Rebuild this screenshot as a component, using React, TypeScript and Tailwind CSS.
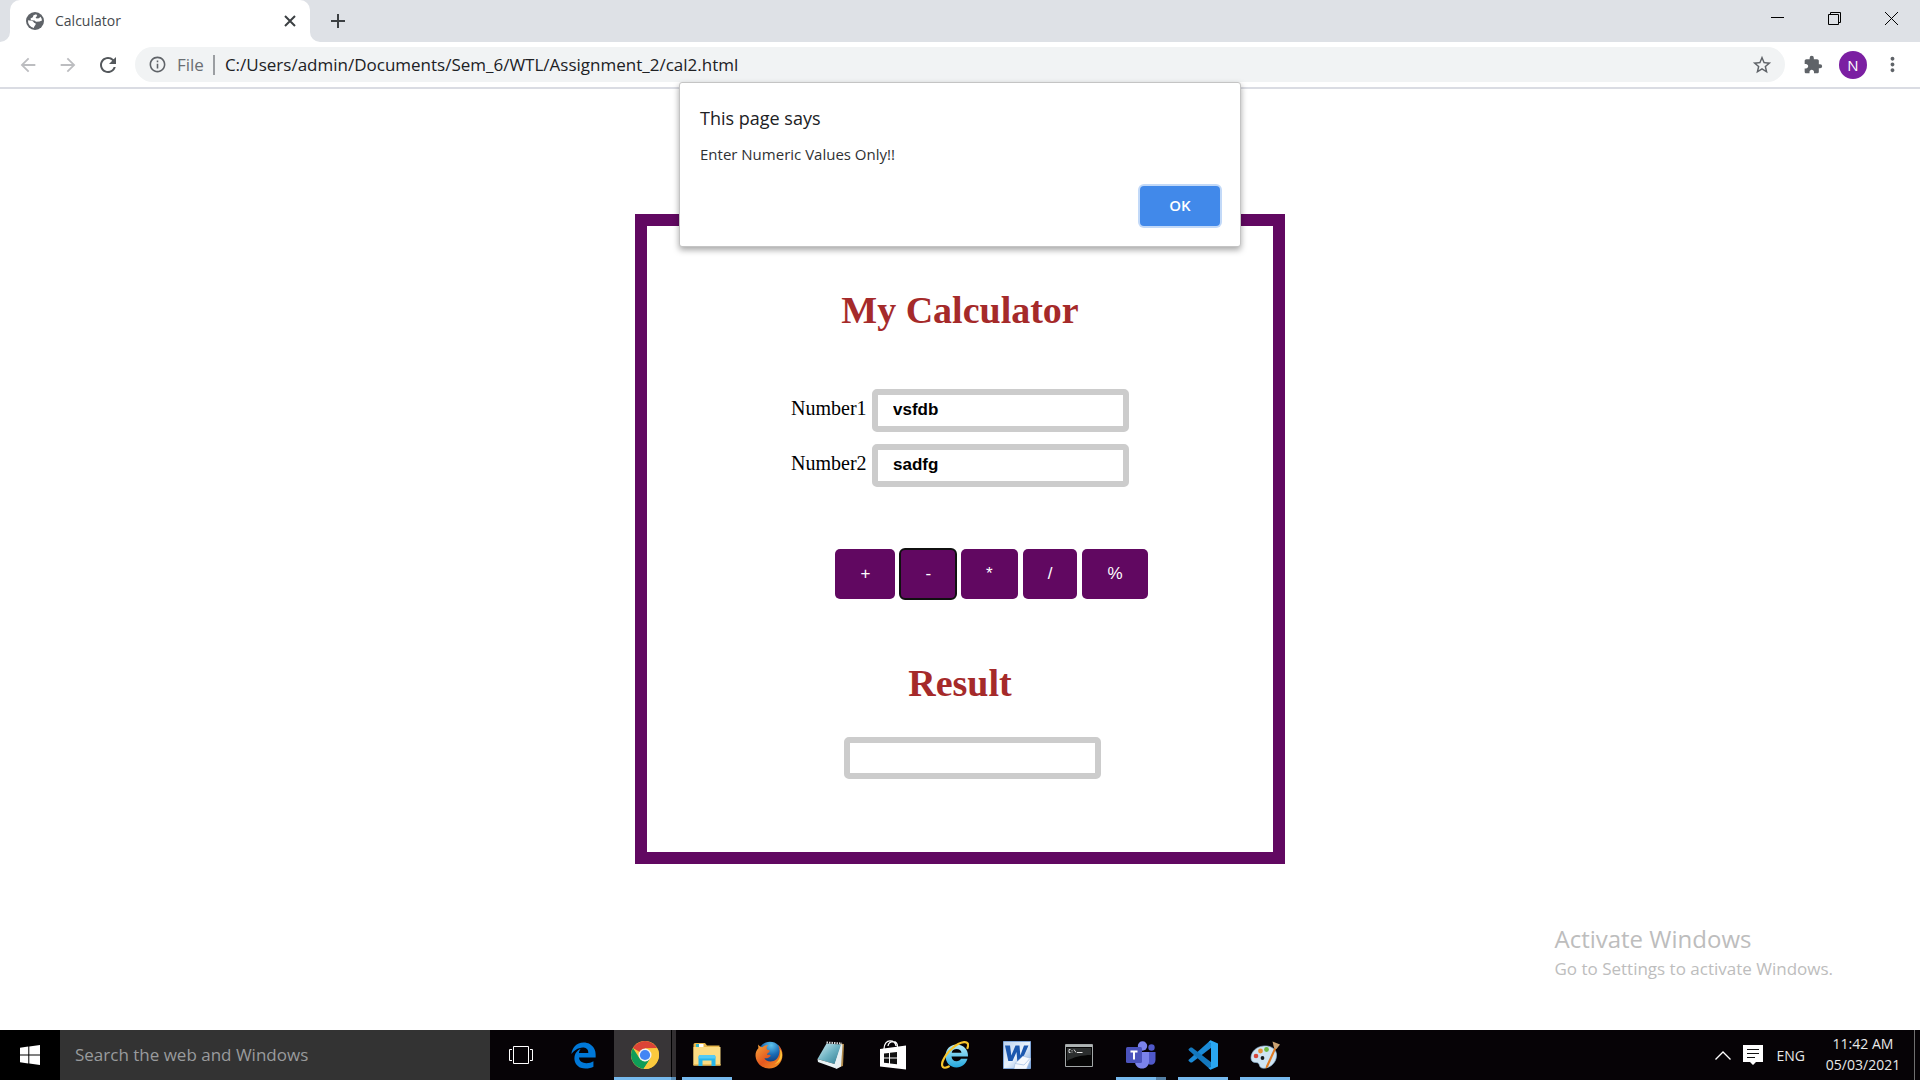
import React from "react";
import { MdArrowBack, MdArrowForward, MdRefresh, MdInfoOutline, MdStarBorder, MdExtension, MdMoreVert } from "react-icons/md";
import { FaEdgeLegacy } from "react-icons/fa";

function GlobeIcon() {
  return (
    <svg viewBox="0 0 18 18" className="size-[18px] shrink-0" aria-hidden="true">
      <circle cx="9" cy="9" r="9" fill="#5f6368" />
      <path d="M10.200 2.200 7.500 3.200 6.800 5.200 4.500 6.500 5 8.200 8.500 8.400 10 9.800 13.500 9.600 16 8.600A7 7 0 0 0 14.500 4.700L13 6.300 10.500 6.500 9.600 5.300 11.300 4z" fill="#fff" />
      <path d="M2 8.300c1.500.3 3.600.1 4.800.9 1 .7.8 1.500 1.900 1.800 1.100.2 1.300 1 .7 2-.5.900-1.400 1.300-1.500 2.900A7 7 0 0 1 2 8.300z" fill="#fff" />
    </svg>
  );
}

function ChromeIcon() {
  return (
    <svg viewBox="0 0 28 28" className="size-7" aria-hidden="true">
      <circle cx="14" cy="14" r="14" fill="#fbc93d" />
      <path d="M14 14 1.900 7A14 14 0 0 1 26.100 7L14 7.600z" fill="#db4437" />
      <path d="M1.900 7a14 14 0 0 0 10.600 20.900L19.600 17.200 14 20.400 8.500 17.200z" fill="#0f9d58" />
      <path d="M14 7.600h12.400a14 14 0 0 1-13.900 20.300l7.100-10.700z" fill="#fbc93d" />
      <circle cx="14" cy="14" r="6.500" fill="#f1f1f1" />
      <circle cx="14" cy="14" r="5.100" fill="#4285f4" />
    </svg>
  );
}

function ExplorerIcon() {
  return (
    <svg viewBox="0 0 28 26" className="h-[26px] w-7" aria-hidden="true">
      <path d="M.500 2.500Q.500 1 2 1h10l2 2.500h12.500v19H.500z" fill="#e8b84a" />
      <path d="M3 2h7.500v3H3z" fill="#fff" />
      <path d="M3 2h3v3H3z" fill="#35b6c9" />
      <path d="M.500 5h27v18.500H.500z" fill="#fbdc83" />
      <path d="M.500 22h27v1.500H.500z" fill="#eec057" />
      <path d="M5.500 24V15Q5.500 13 7.500 13h13q2 0 2 2v9h-4v-5.500h-9V24z" fill="#27b5ea" />
      <path d="M5.500 15q0-2 2-2h13q2 0 2 2v1.500h-17z" fill="#53cbf5" />
    </svg>
  );
}

function FirefoxIcon() {
  return (
    <svg viewBox="0 0 28 28" className="size-7" aria-hidden="true">
      <defs>
        <radialGradient id="ffGlobe" cx="0.550" cy="0.150" r="0.800">
          <stop offset="0" stopColor="#5fc4ee" />
          <stop offset="0.500" stopColor="#1b6bb5" />
          <stop offset="1" stopColor="#12306e" />
        </radialGradient>
        <linearGradient id="ffFox" x1="0" y1="0" x2="1" y2="1">
          <stop offset="0" stopColor="#f6a63a" />
          <stop offset="0.500" stopColor="#e4581f" />
          <stop offset="1" stopColor="#f59a23" />
        </linearGradient>
      </defs>
      <circle cx="15" cy="12.500" r="11.800" fill="url(#ffGlobe)" />
      <path d="M3.500 3.500C3 5 3.200 6 3.500 7 1 9.500.300 12.500.600 15.500 1.500 22.500 7 27.500 14 27.500c8 0 13.500-6 13.500-13.500 0-4-1.500-7.500-4.500-10 1.500 3 1.800 5.500 1.300 8-.6 5-4.300 8.500-8.800 8.500-3 0-5.500-1.500-6-3.500 2 .8 3.500.200 5-1 .5-.5 1-.8 1.500-.9-1-1.600-2.500-1.600-4-1.100.2-1 .2-1.700 1.800-2.500.9-.5 1-1.700.4-2.500-1.400 0-2.200-.5-2.700-1.500C11.700 5.500 12.500 4.500 13.500 4 10.500 3.800 8.500 5 7.300 6.200 6 6 4.300 5.500 3.500 3.500z" fill="url(#ffFox)" />
      <path d="M24.500 8c2 5 .5 12-5 15 6-1 8-6 7.500-10-.2-2-1.200-3.600-2.500-5z" fill="#fbc53a" />
    </svg>
  );
}

function NotepadIcon() {
  return (
    <svg viewBox="0 0 28 28" className="size-7" aria-hidden="true">
      <defs>
        <linearGradient id="npad" x1="0" y1="0" x2="1" y2="1">
          <stop offset="0" stopColor="#d5eef2" />
          <stop offset="0.500" stopColor="#6fb4c4" />
          <stop offset="1" stopColor="#2f7b91" />
        </linearGradient>
      </defs>
      <path d="M23 2.500 27 3l-1 22-6 2z" fill="#b08a4a" />
      <path d="m23.500 3 2 .5-1.500 22-4.500 2.500-3-3z" fill="#e8f0f2" />
      <path d="M9.500 2.500 24 3.500 17.500 23 .500 18z" fill="url(#npad)" />
      <path d="m.500 18 17 5 1.500 4.500L1 21z" fill="#e9f3f5" />
      <path d="M9.500 1.500 25 2.500" stroke="#d9d9d9" strokeWidth="2" strokeDasharray="1.500 1" />
    </svg>
  );
}

function StoreIcon() {
  return (
    <svg viewBox="0 0 28 30" className="h-[30px] w-7" aria-hidden="true">
      <path d="M5 9C5 3.500 8 .800 11 .800S16.500 3 17 6M9 6c.5-3 3-4.300 5.300-4.300C17 1.700 18.500 4 18.500 7" fill="none" stroke="#fff" strokeWidth="1.300" />
      <path d="M1 9 27 5.500v24L1 26.500z" fill="#fff" />
      <path d="m5 13.500 5-.6v4.700H5zM11 12.800l7-.9v5.700h-7zM5 18.600h5v4.700l-5-.5zM11 18.600h7v5.600l-7-.8z" fill="#111" />
    </svg>
  );
}

function ExplorerEIcon() {
  return (
    <svg viewBox="0 0 28 28" className="size-7" aria-hidden="true">
      <defs>
        <linearGradient id="ieBody" x1="0" y1="0" x2="0" y2="1">
          <stop offset="0" stopColor="#b6ecfb" />
          <stop offset="1" stopColor="#22a7dd" />
        </linearGradient>
      </defs>
      <path d="M27 15.500H10.500c.3 3 2.200 4.800 5 4.800 2.200 0 3.700-1 4.500-2.500h6.500C25 23 21 26.500 15.500 26.500 9 26.500 4.500 21.500 4.500 15S9 3.500 15.500 3.500C22.500 3.500 27.500 8.500 27 15.500zM10.700 11.700h9.800c-.4-2.200-2.200-3.600-4.900-3.600s-4.400 1.400-4.900 3.600z" fill="url(#ieBody)" />
      <path d="M26.500 7C28 3 26.500.800 23 1.200 15.500 2 5 11.500 1.800 20c-2 5.500.2 8.500 6 5.500" fill="none" stroke="#f7c52c" strokeWidth="2.200" strokeLinecap="round" />
    </svg>
  );
}

function WordIcon() {
  return (
    <svg viewBox="0 0 28 28" className="size-7" aria-hidden="true">
      <defs>
        <linearGradient id="wordBg" x1="0" y1="0" x2="1" y2="1">
          <stop offset="0" stopColor="#bcd3f0" />
          <stop offset="0.500" stopColor="#e8f1fb" />
          <stop offset="1" stopColor="#7ba5da" />
        </linearGradient>
      </defs>
      <path d="M.500.500h27v27H.500z" fill="url(#wordBg)" stroke="#7fa6d9" />
      <path d="M2 4.500h5l1.300 10L12.500 4.500h4l.8 10L21 4.500h4.500L18.500 20h-4.200l-.8-9-4 9H5.300z" fill="#1b57ae" />
      <path d="m20 15 8 2.500-4.500 10.500H11l1-5.500z" fill="#f6f9fd" stroke="#9db9de" strokeWidth="0.600" />
      <path d="m12 22.500 9 1.500 5.500-6" fill="none" stroke="#aac3e4" strokeWidth="0.800" />
    </svg>
  );
}

function TerminalIcon() {
  return (
    <svg viewBox="0 0 28 23" className="h-[23px] w-7" aria-hidden="true">
      <path d="M.500.500h27v22H.500z" fill="#050505" stroke="#a3a8a8" />
      <path d="M1 1h26v2H1z" fill="#aeb4b4" />
      <path d="M2 4h24v7C18 11 8 13 2 17z" fill="#2b2e2e" />
      <path d="M5.500 5.500H4v3h1.500M7 6v.8M7 7.700v.8M9 5.500l2 3" fill="none" stroke="#e5e5e5" strokeWidth="0.900" />
      <path d="M12 8.500h5.500" stroke="#e5e5e5" />
    </svg>
  );
}

function TeamsIcon() {
  return (
    <svg viewBox="0 0 30 28" className="h-7 w-[30px]" aria-hidden="true">
      <circle cx="25.500" cy="6.500" r="3.200" fill="#5059c9" />
      <path d="M21 11h8.500v8c0 3-2 4.800-4.500 4.800S21 22 21 19z" fill="#5059c9" />
      <circle cx="16.500" cy="5" r="4.700" fill="#7b83eb" />
      <path d="M9 11h14v9.500c0 4.300-3 7-7 7s-7-2.700-7-7z" fill="#7b83eb" />
      <path d="M1.500 6H14.500Q16 6 16 7.500v13Q16 22 14.500 22H1.500Q0 22 0 20.500v-13Q0 6 1.500 6z" fill="#4b53bc" />
      <path d="M4.500 9.500h7v2H9v7H7v-7H4.500z" fill="#fff" />
    </svg>
  );
}

function CodeIcon() {
  return (
    <svg viewBox="0 0 30 30" className="size-[30px]" aria-hidden="true">
      <path d="M22.500.300 1 19.500l-.6 1.200L2.500 22.500l1.500.1L23.500 7.500z" fill="#1b8ad6" />
      <path d="M22.500 29.700 1 10.500.400 9.300 2.500 7.500 4 7.400 23.500 22.500z" fill="#1478be" />
      <path d="M22.500.300 30 3.500v23l-7.500 3.200-2-1.800 2.500-1V3l-2.500-.8z" fill="#2aa7f2" />
    </svg>
  );
}

function PaintIcon() {
  return (
    <svg viewBox="0 0 30 28" className="h-7 w-[30px]" aria-hidden="true">
      <path d="M14 5C6 5.500 1 11 1 17c0 3 2 4.500 4.500 4.500 2.500-.2 3.500 1 4 3 .6 2.500 3 3 6 2.500C22 26 27 20 26.500 13 26 8 21 4.500 14 5z" fill="#cfe4f3" stroke="#8fb6d2" strokeWidth="0.700" />
      <circle cx="6" cy="15" r="2.300" fill="#d8473c" />
      <circle cx="10.500" cy="10" r="2.400" fill="#e8913a" />
      <circle cx="16.500" cy="8.500" r="2.400" fill="#6cb941" />
      <circle cx="12.500" cy="17" r="1.900" fill="#16191c" />
      <path d="m25 5.500 1.700 1L18 26l-2.500 1.800L16 25z" fill="#e07b23" />
      <path d="M22.500.500 30 3.500 26.500 8l-2.500-1.200z" fill="#c9a272" />
    </svg>
  );
}

function TaskViewIcon() {
  return (
    <svg viewBox="0 0 24 18" className="h-[18px] w-6" fill="none" stroke="#fff" aria-hidden="true">
      <path d="M4.500.500h15v17h-15zM3 3.500H.500v11H3M21 3.500h2.500v11H21" />
    </svg>
  );
}

const apps = [
  { name: "Task View", icon: <TaskViewIcon />, state: "none" },
  { name: "Edge", icon: <FaEdgeLegacy className="size-[27px] text-[#0078d7]" />, state: "none" },
  { name: "Chrome", icon: <ChromeIcon />, state: "active" },
  { name: "File Explorer", icon: <ExplorerIcon />, state: "open" },
  { name: "Firefox", icon: <FirefoxIcon />, state: "none" },
  { name: "Notepad", icon: <NotepadIcon />, state: "none" },
  { name: "Store", icon: <StoreIcon />, state: "none" },
  { name: "Internet Explorer", icon: <ExplorerEIcon />, state: "none" },
  { name: "Word", icon: <WordIcon />, state: "none" },
  { name: "Command Prompt", icon: <TerminalIcon />, state: "none" },
  { name: "Teams", icon: <TeamsIcon />, state: "stacked" },
  { name: "Visual Studio Code", icon: <CodeIcon />, state: "open" },
  { name: "Paint", icon: <PaintIcon />, state: "open" },
];

function TaskbarApp({ name, icon, state }: { name: string; icon: React.ReactNode; state: string }) {
  const active = state === "active";
  return (
    <button aria-label={name} className={active ? "relative flex h-[50px] w-[62px] items-center justify-center bg-[#383537]" : "relative flex h-[50px] w-[62px] items-center justify-center"}>
      {icon}
      {active && (
        <span className="absolute inset-0 flex justify-end">
          <span className="h-full w-[5px] border-l border-black bg-black/10" />
        </span>
      )}
      {active && (
        <span className="absolute inset-x-0 bottom-0 flex h-[3px]">
          <span className="flex-1 bg-[#76b9ed]" />
          <span className="w-[5px] bg-[#5b8fb8]" />
        </span>
      )}
      {state === "open" && <span className="absolute inset-x-[6px] bottom-0 h-[3px] bg-[#76b9ed]" />}
      {state === "stacked" && (
        <span className="absolute inset-x-[6px] bottom-0 flex h-[3px]">
          <span className="flex-1 bg-[#76b9ed]" />
          <span className="w-[10px] bg-[#5480a5]" />
        </span>
      )}
    </button>
  );
}

function BrowserHeader() {
  return (
    <header>
      <div className="flex h-[42px] items-stretch bg-[#dee1e6] pl-[10px]">
        <div className="relative flex w-[300px] items-center rounded-t-[10px] bg-white pr-[14px] pl-4">
          <GlobeIcon />
          <span className="ml-[11px] flex-1 pb-[2px] text-[14px] text-[#45494d]">Calculator</span>
          <button aria-label="Close tab">
            <svg viewBox="0 0 12 12" className="size-3" stroke="#3c4043" strokeWidth="2" aria-hidden="true">
              <path d="m1 1 10 10M11 1 1 11" />
            </svg>
          </button>
          <svg viewBox="0 0 10 10" className="absolute bottom-0 -left-[10px] size-[10px]" fill="#fff" aria-hidden="true">
            <path d="M10 0v10H0A10 10 0 0 0 10 0z" />
          </svg>
          <svg viewBox="0 0 10 10" className="absolute -right-[10px] bottom-0 size-[10px]" fill="#fff" aria-hidden="true">
            <path d="M0 0v10h10A10 10 0 0 1 0 0z" />
          </svg>
        </div>
        <button aria-label="New tab" className="ml-5 self-center">
          <svg viewBox="0 0 16 16" className="size-4" stroke="#3c4043" strokeWidth="2" aria-hidden="true">
            <path d="M8 1v14M1 8h14" />
          </svg>
        </button>
        <div className="ml-auto flex h-[37px]">
          <button aria-label="Minimize" className="flex w-[57px] items-center justify-center">
            <svg viewBox="0 0 13 13" className="size-[13px]" stroke="#000" aria-hidden="true"><path d="M0 5.500h13" /></svg>
          </button>
          <button aria-label="Restore" className="flex w-[57px] items-center justify-center">
            <svg viewBox="0 0 13 13" className="size-[13px]" fill="none" stroke="#000" aria-hidden="true">
              <path d="M.500 2.500h10v10H.500zM2.500 2V.500h10v10H11" />
            </svg>
          </button>
          <button aria-label="Close" className="flex w-[57px] items-center justify-center">
            <svg viewBox="0 0 13 13" className="size-[13px]" stroke="#000" aria-hidden="true"><path d="m0 0 13 13M13 0 0 13" /></svg>
          </button>
        </div>
      </div>
      <div className="flex h-[47px] items-center border-b-2 border-[#dadce3] bg-white pr-4 pl-[17px]">
        <button aria-label="Back"><MdArrowBack className="size-[22px] text-[#bcbdc0]" /></button>
        <button aria-label="Forward" className="ml-[18px]"><MdArrowForward className="size-[22px] text-[#bcbdc0]" /></button>
        <button aria-label="Reload" className="ml-[17px]"><MdRefresh className="size-[24px] text-[#54585c]" /></button>
        <div className="ml-[15px] flex h-[35px] flex-1 items-center rounded-full bg-[#f1f3f4] pr-3 pl-[13px]">
          <MdInfoOutline className="size-[19px] text-[#5f6368]" />
          <span className="ml-[10px] text-[17px] text-[#6a6e73]">File</span>
          <span className="ml-[9px] h-5 w-[2px] bg-[#9b9ea2]" />
          <input
            aria-label="Address"
            className="ml-[10px] min-w-0 flex-1 bg-transparent text-[17px] text-[#202124] outline-none"
            defaultValue="C:/Users/admin/Documents/Sem_6/WTL/Assignment_2/cal2.html"
          />
          <button aria-label="Bookmark this page"><MdStarBorder className="size-[22px] text-[#5f6368]" /></button>
        </div>
        <button aria-label="Extensions" className="ml-[18px]"><MdExtension className="size-[20px] text-[#5f6368]" /></button>
        <button aria-label="Profile" className="ml-4 size-7 rounded-full bg-[#7b1fa2] text-[15px] leading-7 text-white">N</button>
        <button aria-label="Menu" className="ml-[14px]"><MdMoreVert className="size-[23px] text-[#5f6368]" /></button>
      </div>
    </header>
  );
}

function AlertDialog() {
  return (
    <div
      role="alertdialog"
      aria-labelledby="alert-title"
      aria-describedby="alert-text"
      className="absolute top-[82px] left-1/2 flex w-[562px] -translate-x-1/2 flex-col rounded-[3px] border border-[#c4c4c4] bg-white px-5 pt-[22px] pb-5 shadow-[0_3px_6px_rgba(0,0,0,0.35)]"
    >
      <h2 id="alert-title" className="text-[18px] leading-[26px] text-[#202124]">This page says</h2>
      <p id="alert-text" className="mt-[13px] text-[15px] leading-[20px] text-[#303134]">Enter Numeric Values Only!!</p>
      <button className="mt-[22px] h-10 w-20 self-end rounded-[4px] bg-[#4189ea] pb-[2px] text-[15px] font-semibold text-white ring-2 ring-[#c2d9f8]">OK</button>
    </div>
  );
}

const fieldClass = "h-[43px] w-[257px] rounded-[5px] border-[6px] border-[#cccccc] bg-white pb-[1px] pl-[15px] font-['Liberation_Sans',Arial,sans-serif] text-[17px] font-bold text-black outline-none";
const keyClass = "h-[50px] rounded-[5px] bg-[#610861] px-[25px] text-[17px] text-white";
const keyFocusClass = "h-[50px] rounded-[5px] bg-[#610861] px-[25px] text-[17px] text-white outline-2 -outline-offset-1 outline-[#101010]";
const headingClass = "text-center text-[38px] leading-[44px] font-bold text-[#a52a2a]";

function Calculator() {
  return (
    <section className="mx-auto mt-[125px] w-[650px] border-[12px] border-[#610861] bg-white pt-[62px] pb-[73px] font-['Liberation_Serif','Times_New_Roman',serif]">
      <h1 className={headingClass}>My Calculator</h1>
      <div className="mt-[57px] flex flex-col items-center gap-3">
        <div className="flex items-baseline gap-[5px]">
          <label htmlFor="n1" className="w-[76px] text-[20px] leading-6 text-black">Number1</label>
          <input id="n1" type="text" defaultValue="vsfdb" className={fieldClass} />
        </div>
        <div className="flex items-baseline gap-[5px]">
          <label htmlFor="n2" className="w-[76px] text-[20px] leading-6 text-black">Number2</label>
          <input id="n2" type="text" defaultValue="sadfg" className={fieldClass} />
        </div>
      </div>
      <div className="mt-[62px] flex justify-center gap-[5px] pl-[63px] font-['Liberation_Sans',Arial,sans-serif]">
        {["+", "-", "*", "/", "%"].map((key) => (
          <button key={key} className={key === "-" ? keyFocusClass : keyClass}>{key}</button>
        ))}
      </div>
      <h1 className={"mt-[62px] " + headingClass}>Result</h1>
      <div className="mt-8 flex justify-center pl-[25px]">
        <input aria-label="Result" type="text" readOnly className="h-[42px] w-[257px] rounded-[5px] border-[6px] border-[#cccccc] bg-white outline-none" />
      </div>
    </section>
  );
}

function Taskbar() {
  return (
    <footer className="flex h-[50px] items-stretch bg-[#060306] text-[#e8e8e8]">
      <button aria-label="Start" className="flex w-[60px] items-center justify-center bg-black">
        <svg viewBox="0 0 20 20" className="size-5" fill="#fff" aria-hidden="true">
          <path d="M0 2.800 8.300 1.600v7.900H0zM9.300 1.500 20 0v9.500H9.300zM0 10.500h8.300v7.900L0 17.200zM9.300 10.500H20V20L9.300 18.500z" />
        </svg>
      </button>
      <input aria-label="Search" placeholder="Search the web and Windows" className="w-[430px] bg-[#333333] px-[15px] text-[17px] outline-none placeholder:text-[#999b9d]" />
      <nav className="flex">
        {apps.map((app) => (
          <TaskbarApp key={app.name} name={app.name} icon={app.icon} state={app.state} />
        ))}
      </nav>
      <div className="ml-auto flex items-center">
        <button aria-label="Show hidden icons">
          <svg viewBox="0 0 16 9" className="h-[9px] w-4" fill="none" stroke="#fff" strokeWidth="1.300" aria-hidden="true"><path d="m.500 8.500 7.500-7.500 7.500 7.500" /></svg>
        </button>
        <button aria-label="Notifications" className="ml-3">
          <svg viewBox="0 0 20 20" className="size-5" aria-hidden="true">
            <path d="M0 0h20v17h-7l-3 3-3-3H0z" fill="#fff" />
            <path d="M4 4.500h12M4 8.500h12M4 12.500h8" stroke="#111" />
          </svg>
        </button>
        <span className="ml-[14px] text-[14px]">ENG</span>
        <time className="ml-5 flex w-[76px] flex-col items-center pb-[2px] text-[14px] leading-[21px] whitespace-nowrap">
          <span>11:42 AM</span>
          <span>05/03/2021</span>
        </time>
        <span className="ml-[13px] h-full w-[6px] border-l border-[#6f6f6f]" />
      </div>
    </footer>
  );
}

export default function App() {
  return (
    <div className="relative flex min-h-screen flex-col bg-white font-['Open_Sans','Segoe_UI',sans-serif]">
      <BrowserHeader />
      <main className="relative flex-1">
        <Calculator />
        <aside className="absolute right-[87px] bottom-[48px] text-[#bdbdbd]">
          <p className="text-[24px] leading-[34px]">Activate Windows</p>
          <p className="text-[17px] leading-[26px]">Go to Settings to activate Windows.</p>
        </aside>
      </main>
      <Taskbar />
      <AlertDialog />
    </div>
  );
}
